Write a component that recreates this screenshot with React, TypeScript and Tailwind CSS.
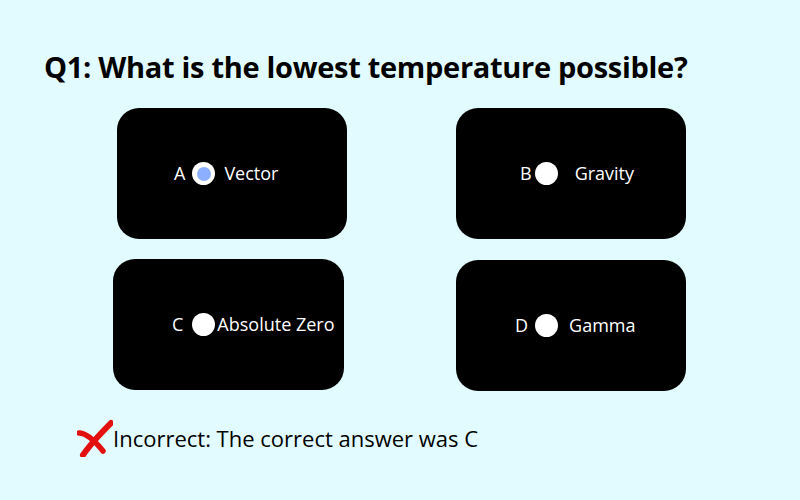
import React from "react";

const font = { fontFamily: '"Open Sans", "Liberation Sans", sans-serif' };

function Dot({ selected }: { selected?: boolean }) {
  return (
    <span className="flex h-[23px] w-[23px] shrink-0 items-center justify-center rounded-full bg-white">
      {selected && <span className="h-[14px] w-[14px] rounded-full bg-[#8cafff]" />}
    </span>
  );
}

function Card({
  letter,
  label,
  pl,
  g1,
  g2,
  selected,
  className,
}: {
  letter: string;
  label: string;
  pl: string;
  g1: string;
  g2: string;
  selected?: boolean;
  className: string;
}) {
  return (
    <div className={`flex h-[131px] w-[230px] items-center rounded-[22px] bg-black text-[18px] text-white ${pl} ${className}`}>
      <span>{letter}</span>
      <span className={g1} />
      <Dot selected={selected} />
      <span className={g2} />
      <span>{label}</span>
    </div>
  );
}

export default function App() {
  return (
    <div className="flex h-[500px] w-[800px] flex-col bg-[#e2fbfe]" style={font}>
      <h1 className="ml-[44px] mt-[47px] text-[29px] font-bold leading-[40px] tracking-[-0.3px] text-black">
        Q1: What is the lowest temperature possible?
      </h1>
      <div className="mt-[21px] flex">
        <Card letter="A" label="Vector" pl="pl-[57px]" g1="w-[7px]" g2="w-[9px]" selected className="ml-[117px]" />
        <Card letter="B" label="Gravity" pl="pl-[64px]" g1="w-[3px]" g2="w-[17px]" className="ml-[109px]" />
      </div>
      <div className="mt-[20px] flex">
        <Card letter="C" label="Absolute Zero" pl="pl-[59px]" g1="w-[9px]" g2="w-[2px]" className="ml-[113px] w-[231px]" />
        <Card letter="D" label="Gamma" pl="pl-[59px]" g1="w-[7px]" g2="w-[11px]" className="ml-[112px] mt-[1px]" />
      </div>
      <div className="ml-[77px] mt-[28px] flex items-center">
        <svg width="36" height="38" viewBox="0 0 36 38" className="shrink-0">
          <path d="M34 4 C26 12 14 24 6 36" stroke="#e31010" strokeWidth="6" strokeLinecap="round" fill="none" />
          <path d="M2 14 C10 14 18 22 26 32" stroke="#e31010" strokeWidth="5.5" strokeLinecap="round" fill="none" />
        </svg>
        <span className="text-[22px] text-black">Incorrect: The correct answer was C</span>
      </div>
    </div>
  );
}
